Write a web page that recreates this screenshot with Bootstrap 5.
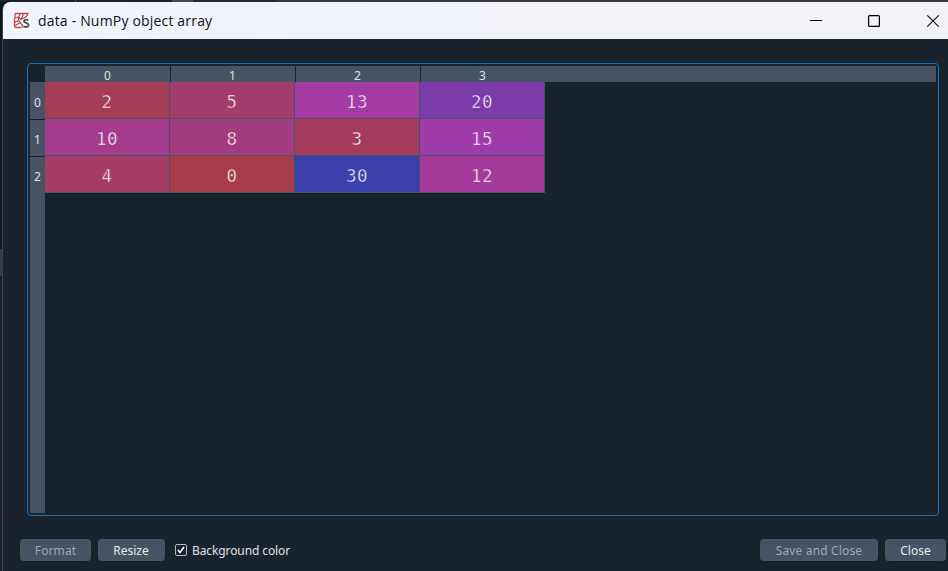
<!DOCTYPE html>
<html lang="en">
<head>
<meta charset="utf-8">
<title>data - NumPy object array</title>
<link href="https://cdn.jsdelivr.net/npm/bootstrap@5.3.0/dist/css/bootstrap.min.css" rel="stylesheet">
<style>
body{width:948px;height:571px;background:#10161f;font-family:"Noto Sans","Open Sans",sans-serif;font-size:12px;line-height:16px;color:#e0e1e3}
.backdrop-strip{height:2px;background:linear-gradient(90deg,#1a202a 75px,#454b54 75px 76px,#1c222c 76px 172px,#444a54 172px 193px,#252a34 193px 277px,#35373d 277px)}
.desktop-row{height:569px}
.dock-edge{width:2px;background:linear-gradient(#10161f 247px,#373a3e 247px 274px,#171e28 274px)}
.app-window{background:#19232d;border-left:1px solid #40434a;border-top-left-radius:8px}
.titlebar{height:37px;background:linear-gradient(90deg,#f0f4fc,#f0f2fa 35%,#f1f2f7 70%);color:#111;padding-left:9px}
.title-label{font-family:"Open Sans","Noto Sans",sans-serif;font-size:14px;line-height:20px;letter-spacing:.18px;margin-left:7px}
.win-controls{padding-right:8px}
.win-controls svg{margin-left:44px}
.win-controls svg:last-child{margin-left:45px}
.view-frame{margin:24px 9px 0 24px;height:453px;border:1px solid #1a72bb;border-radius:4px;padding:2px}
.head-bar{height:16px;margin-left:15px;background:#455364}
.head-cell{width:125px;height:16px;line-height:20px;box-shadow:1px 0 #19232d;font-size:12px}
.head-cell:last-child{box-shadow:none}
.side-bar{width:15px;height:431px;background:#455364}
.side-cell{height:37px;line-height:42px;box-shadow:0 1px #19232d;font-size:12px}
.side-cell:last-child{box-shadow:none}
.values{display:grid;grid-template-columns:repeat(4,125px);grid-auto-rows:37px;align-content:start}
/* The stroke takes the cell's own colour, which gives the digits a light weight */
.value-cell{background:var(--cell);-webkit-text-stroke:.5px var(--cell);border-right:1px solid #455364;border-bottom:1px solid #455364;font:17.5px/40px "DejaVu Sans Mono",monospace;letter-spacing:.4px;color:#fff;height:37px}
.actions{height:22px;margin:23px 2px 0 17px}
.btn.tool{--bs-btn-bg:#455364;--bs-btn-color:#e8e9eb;--bs-btn-disabled-bg:#455364;--bs-btn-disabled-color:#9da9b5;--bs-btn-disabled-opacity:1;border:0;border-radius:4px;height:22px;padding:1px 0 0;font-size:12px;line-height:21px}
.w-format{width:71px;letter-spacing:.1px}.w-resize{width:67px;margin-left:7px}.w-save{width:118px;letter-spacing:.15px}.w-close{width:61px;margin-left:7px}
.btn.w-resize{padding-right:1px}
.check-mark{margin-left:10px}
.check-label{margin-left:5px;line-height:23px;letter-spacing:-.1px}
</style>
</head>
<body class="overflow-hidden">
<div class="backdrop-strip"></div>
<div class="desktop-row d-flex">
  <div class="dock-edge"></div>
  <main class="app-window flex-grow-1 overflow-hidden">
    <header class="titlebar d-flex align-items-center">
      <svg width="19" height="19" viewBox="0 0 19 19" fill="none">
        <rect width="19" height="19" rx="3" fill="#fcfbfb"/>
        <path d="M3 2.500H16L14.500 5.500 9 8.500 6.500 6 3 7V2.500M6.500 6L8.500 2.500M9 8.500L11.500 3M2.500 7V15.500Q2.500 16.500 4 16.500H9.500M6.500 6V9.500L2.500 11.500M6.500 9.500L10.500 14.500V16.500M2.500 15L7.500 12" stroke="#b84b50" stroke-width="1.300"/>
        <path d="M16.500 9.200c-1.500-1-4.400-.8-4.400 1s4.500 1.500 4.500 3.800-3.200 2.400-5.100 1.200" stroke="#505356" stroke-width="1.900"/>
      </svg>
      <span class="title-label">data - NumPy object array</span>
      <div class="win-controls d-flex align-items-center ms-auto">
        <svg width="14" height="14" viewBox="0 0 14 14"><path d="M1 6.500h12" stroke="#000"/></svg>
        <svg width="14" height="14" viewBox="0 0 14 14"><rect x="1.600" y="1.600" width="10.800" height="10.800" rx="1" fill="none" stroke="#000" stroke-width="1.200"/></svg>
        <svg width="14" height="14" viewBox="0 0 14 14"><path d="M1.300 1.300l11.400 11.400M12.700 1.300L1.300 12.700" stroke="#111" stroke-width="1.200"/></svg>
      </div>
    </header>
    <section class="view-frame">
      <div class="head-bar d-flex text-center">
        <div class="head-cell">0</div><div class="head-cell">1</div><div class="head-cell">2</div><div class="head-cell">3</div>
      </div>
      <div class="d-flex">
        <div class="side-bar text-center">
          <div class="side-cell">0</div><div class="side-cell">1</div><div class="side-cell">2</div>
        </div>
        <div class="values text-center">
          <div class="value-cell" style="--cell:#a53d56">2</div>
          <div class="value-cell" style="--cell:#a43c6b">5</div>
          <div class="value-cell" style="--cell:#a43ba3">13</div>
          <div class="value-cell" style="--cell:#7b3ba9">20</div>
          <div class="value-cell" style="--cell:#a43b8d">10</div>
          <div class="value-cell" style="--cell:#a33b7f">8</div>
          <div class="value-cell" style="--cell:#a43b5c">3</div>
          <div class="value-cell" style="--cell:#9f3aab">15</div>
          <div class="value-cell" style="--cell:#a43c63">4</div>
          <div class="value-cell" style="--cell:#a53c47">0</div>
          <div class="value-cell" style="--cell:#3940ab">30</div>
          <div class="value-cell" style="--cell:#a43b9b">12</div>
        </div>
      </div>
    </section>
    <footer class="actions d-flex align-items-center">
      <button class="btn tool w-format" disabled>Format</button>
      <button class="btn tool w-resize">Resize</button>
      <svg class="check-mark" width="12" height="12" viewBox="0 0 12 12" fill="none"><rect x=".5" y=".5" width="11" height="11" rx="1.500" stroke="#b5bac0"/><path d="M3 6l2 2.500L9 3" stroke="#fff" stroke-width="1.600"/></svg>
      <span class="check-label">Background color</span>
      <button class="btn tool w-save ms-auto" disabled>Save and Close</button>
      <button class="btn tool w-close">Close</button>
    </footer>
  </main>
</div>
<script src="https://cdn.jsdelivr.net/npm/bootstrap@5.3.0/dist/js/bootstrap.bundle.min.js"></script>
</body>
</html>
